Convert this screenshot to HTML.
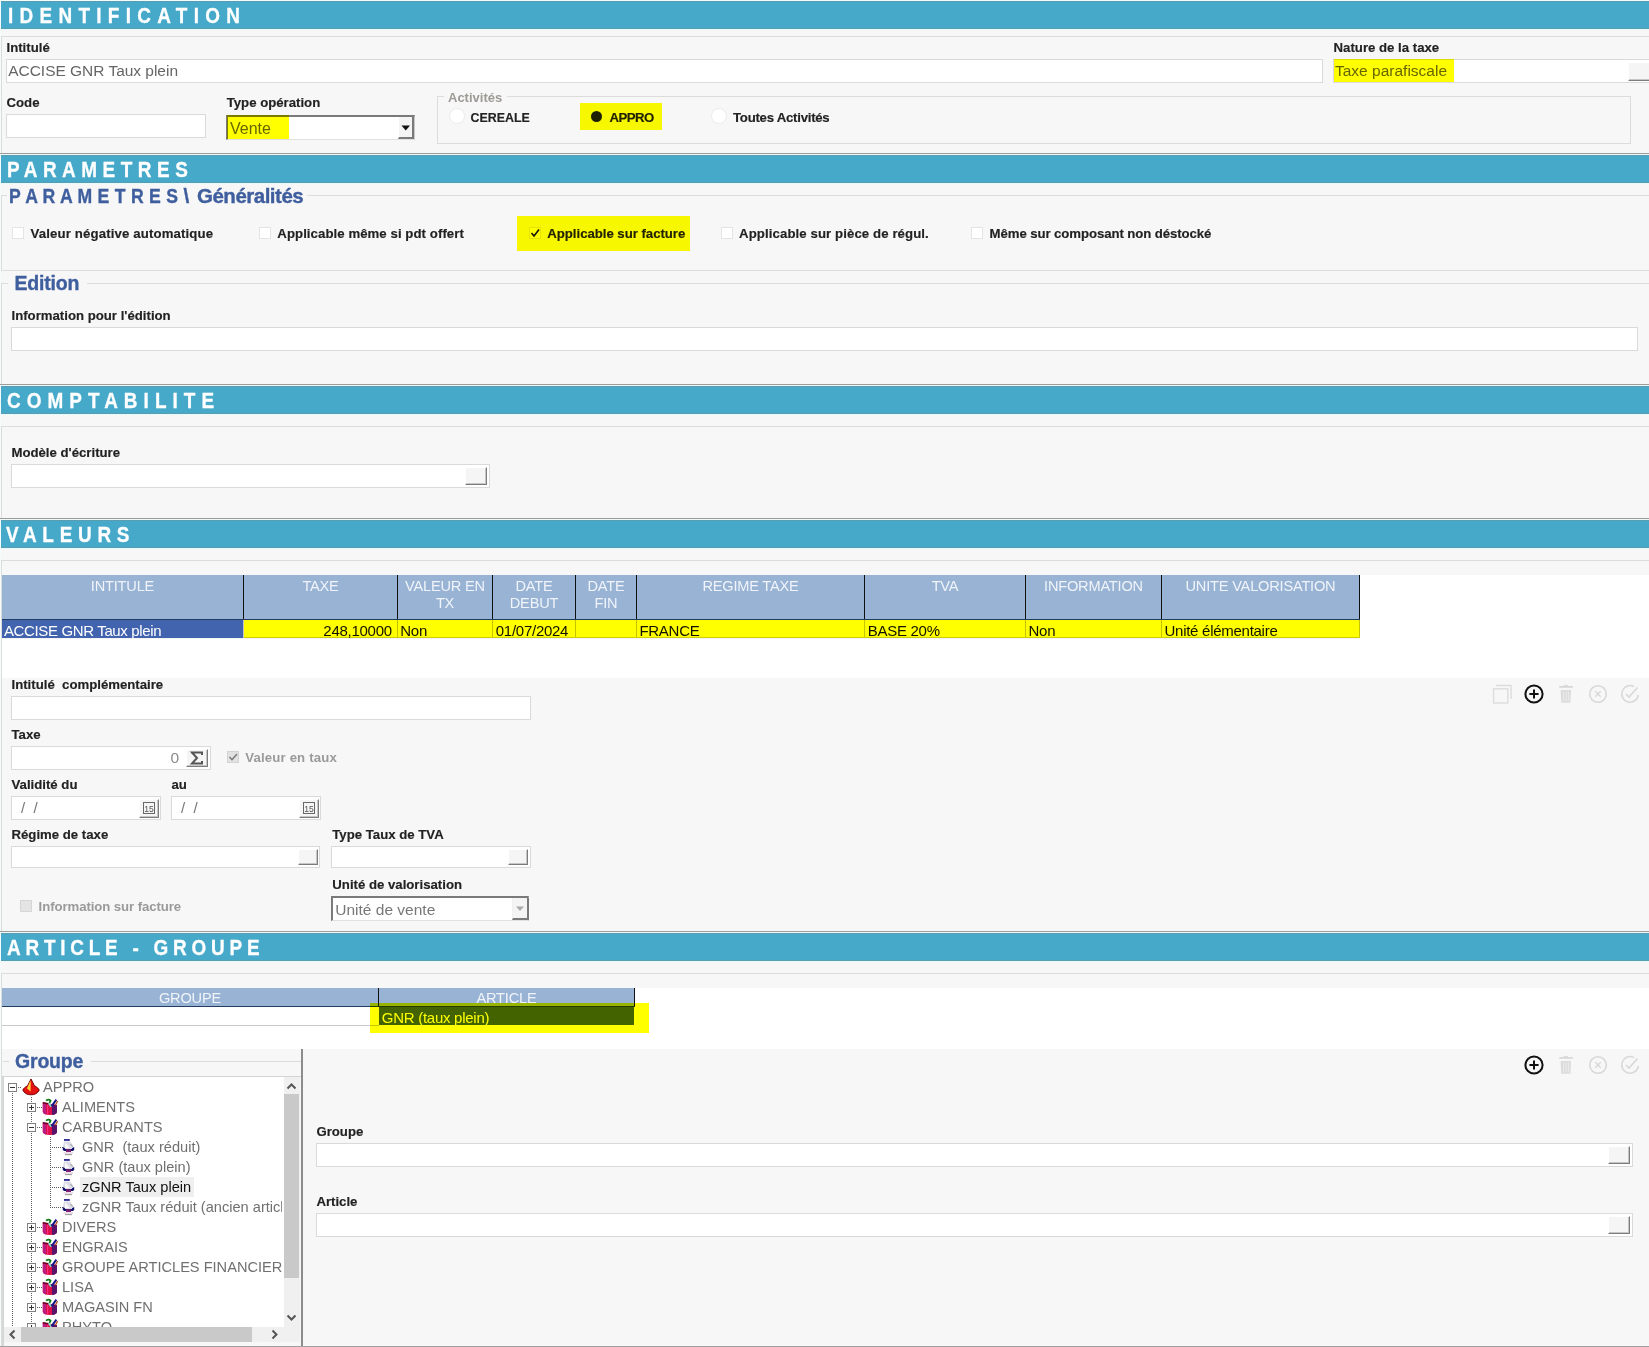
<!DOCTYPE html>
<html><head><meta charset="utf-8"><style>
html,body{margin:0;padding:0;width:1649px;height:1347px;overflow:hidden;background:#f7f7f7}
body{position:relative;font-family:"Liberation Sans",sans-serif}
.a{position:absolute}
.t{position:absolute;white-space:nowrap;font-family:"Liberation Sans",sans-serif}
</style></head><body>
<div class="a" style="left:0;top:0;width:1649px;height:1347px;background:#f7f7f7"></div>
<div class="a" style="left:0px;top:0px;width:1649px;height:1px;background:#f2fcfc;"></div>
<div class="a" style="left:0px;top:0px;width:1px;height:1347px;background:#f6fbfb;"></div>
<div class="a" style="left:1px;top:1px;width:1648px;height:28px;background:#47a9c9;"></div>
<div class="a" style="left:1px;top:1px;width:1648px;height:1px;background:#5a9db0;"></div>
<div class="a" style="left:1px;top:28px;width:1648px;height:1px;background:#5a9db0;"></div>
<div class="a" style="left:0px;top:29px;width:1649px;height:1px;background:#e6fbfb;"></div>
<div class="t" style="left:7.80px;top:6px;font-size:22px;line-height:20px;color:#fff;transform:scaleX(0.86);transform-origin:0.00px 0;font-weight:bold;letter-spacing:7.331px;-webkit-text-stroke:0.3px #fff;">IDENTIFICATION</div>
<div class="a" style="left:1px;top:36px;width:1648px;height:1px;background:#dcdcdc;"></div>
<div class="a" style="left:1px;top:36px;width:1px;height:117px;background:#dcdcdc;"></div>
<div class="t" style="left:6.50px;top:38px;font-size:13.2px;line-height:20px;color:#222;font-weight:bold;-webkit-text-stroke:0.15px #222;">Intitulé</div>
<div class="a" style="left:6px;top:59px;width:1317px;height:24px;background:#fff;box-sizing:border-box;border:1px solid #dadada;"></div>
<div class="t" style="left:8.20px;top:61px;font-size:15.5px;line-height:20px;color:#666;letter-spacing:-0.023px;">ACCISE GNR Taux plein</div>
<div class="t" style="left:1333.60px;top:38px;font-size:13.2px;line-height:20px;color:#222;font-weight:bold;-webkit-text-stroke:0.15px #222;">Nature de la taxe</div>
<div class="a" style="left:1333px;top:59px;width:320px;height:24px;background:#fff;box-sizing:border-box;border:1px solid #dadada;"></div>
<div class="a" style="left:1628px;top:62px;width:24px;height:19px;background:#f5f5f5;box-sizing:border-box;border-right:1px solid #7c7c7c;border-bottom:1px solid #7c7c7c;border-top:1px solid #fff;border-left:1px solid #fff;box-shadow:inset -1px -1px 0 #c6c6c6;"></div>
<div class="t" style="left:1335.00px;top:60.599999999999994px;font-size:15.5px;line-height:20px;color:#666;">Taxe parafiscale</div>
<div class="a" style="left:1334px;top:59px;width:120px;height:23px;background:#ffff00;mix-blend-mode:multiply;z-index:50;"></div>
<div class="t" style="left:6.50px;top:93px;font-size:13.2px;line-height:20px;color:#222;font-weight:bold;-webkit-text-stroke:0.15px #222;">Code</div>
<div class="a" style="left:6px;top:114px;width:200px;height:24px;background:#fff;box-sizing:border-box;border:1px solid #dadada;"></div>
<div class="t" style="left:226.70px;top:93px;font-size:13.2px;line-height:20px;color:#222;font-weight:bold;-webkit-text-stroke:0.15px #222;">Type opération</div>
<div class="a" style="left:226px;top:115px;width:189px;height:25px;background:#fff;box-sizing:border-box;border-top:2px solid #7a7a7a;border-left:2px solid #7a7a7a;border-right:1px solid #c8c8c8;border-bottom:1px solid #e0e0e0;"></div>
<div class="a" style="left:398px;top:117px;width:16px;height:22px;background:#f4f4f4;box-sizing:border-box;border-right:2px solid #7a7a7a;border-bottom:2px solid #7a7a7a;border-left:1px solid #fff;"></div>
<svg class="a" style="left:400px;top:124px" width="12" height="8"><path d="M1.5 1.5 L10 1.5 L5.75 6.5 Z" fill="#111"/></svg>
<div class="t" style="left:230.00px;top:119px;font-size:16px;line-height:20px;color:#666;">Vente</div>
<div class="a" style="left:227px;top:115px;width:62px;height:24px;background:#ffff00;mix-blend-mode:multiply;z-index:50;"></div>
<div class="a" style="left:437px;top:96px;width:1194px;height:48px;box-sizing:border-box;border:1px solid #dcdcdc;"></div>
<div class="a" style="left:444px;top:90px;width:63px;height:10px;background:#f7f7f7;"></div>
<div class="t" style="left:448.00px;top:87.6px;font-size:13px;line-height:20px;color:#9d9a95;font-weight:bold;">Activités</div>
<div class="a" style="left:450px;top:109px;width:14px;height:14px;background:#fff;border-radius:50%;box-shadow:0 0 0 1px #ececec;"></div>
<div class="t" style="left:470.60px;top:107.8px;font-size:12.4px;line-height:20px;color:#222;font-weight:bold;-webkit-text-stroke:0.15px #222;">CEREALE</div>
<div class="a" style="left:580px;top:103px;width:82px;height:27px;background:#ffff00;mix-blend-mode:multiply;z-index:50;"></div>
<div class="a" style="left:590.5px;top:111px;width:11px;height:11px;background:#1e1e1e;border-radius:50%;"></div>
<div class="t" style="left:609.40px;top:107.7px;font-size:13.2px;line-height:20px;color:#222;font-weight:bold;-webkit-text-stroke:0.15px #222;letter-spacing:-0.482px;">APPRO</div>
<div class="a" style="left:711.5px;top:109px;width:14px;height:14px;background:#fff;border-radius:50%;box-shadow:0 0 0 1px #ececec;"></div>
<div class="t" style="left:733.00px;top:107.7px;font-size:13.2px;line-height:20px;color:#222;font-weight:bold;-webkit-text-stroke:0.15px #222;letter-spacing:-0.246px;">Toutes Activités</div>
<div class="a" style="left:0px;top:153px;width:1649px;height:1px;background:#9c9c9c;"></div>
<div class="a" style="left:0px;top:154px;width:1649px;height:1px;background:#eefafa;"></div>
<div class="a" style="left:1px;top:155px;width:1648px;height:28px;background:#47a9c9;"></div>
<div class="a" style="left:1px;top:155px;width:1648px;height:1px;background:#5a9db0;"></div>
<div class="a" style="left:1px;top:182px;width:1648px;height:1px;background:#5a9db0;"></div>
<div class="a" style="left:0px;top:183px;width:1649px;height:1px;background:#e6fbfb;"></div>
<div class="t" style="left:7.40px;top:160px;font-size:22px;line-height:20px;color:#fff;transform:scaleX(0.86);transform-origin:0.00px 0;font-weight:bold;letter-spacing:6.425px;-webkit-text-stroke:0.3px #fff;">PARAMETRES</div>
<div class="a" style="left:1px;top:195px;width:1648px;height:1px;background:#dcdcdc;"></div>
<div class="a" style="left:1px;top:195px;width:1px;height:76px;background:#dcdcdc;"></div>
<div class="a" style="left:1px;top:270px;width:1648px;height:1px;background:#dcdcdc;"></div>
<div class="a" style="left:7px;top:184px;width:300px;height:20px;background:#f7f7f7;"></div>
<div class="t" style="left:8.70px;top:186.2px;font-size:20.5px;line-height:20px;color:#3f5e9e;transform:scaleX(0.86);transform-origin:0.00px 0;font-weight:bold;letter-spacing:0.279px;-webkit-text-stroke:0.35px #3f5e9e;">P A R A M E T R E S</div>
<div class="t" style="left:183.40px;top:186.2px;font-size:20.5px;line-height:20px;color:#3f5e9e;font-weight:bold;-webkit-text-stroke:0.35px #3f5e9e;">\</div>
<div class="t" style="left:197.00px;top:186.2px;font-size:20.5px;line-height:20px;color:#3f5e9e;font-weight:bold;letter-spacing:-0.497px;-webkit-text-stroke:0.35px #3f5e9e;">Généralités</div>
<div class="a" style="left:12px;top:227px;width:12px;height:12px;background:#fff;box-sizing:border-box;border:1px solid #e4e4e4;"></div>
<div class="t" style="left:30.60px;top:223.7px;font-size:13.2px;line-height:20px;color:#222;font-weight:bold;-webkit-text-stroke:0.15px #222;letter-spacing:0.139px;">Valeur négative automatique</div>
<div class="a" style="left:259px;top:227px;width:12px;height:12px;background:#fff;box-sizing:border-box;border:1px solid #e4e4e4;"></div>
<div class="t" style="left:277.30px;top:223.7px;font-size:13.2px;line-height:20px;color:#222;font-weight:bold;-webkit-text-stroke:0.15px #222;letter-spacing:0.067px;">Applicable même si pdt offert</div>
<div class="a" style="left:529px;top:227px;width:12px;height:12px;background:#fff;box-sizing:border-box;border:1px solid #e4e4e4;"></div>
<svg class="a" style="left:529px;top:227px" width="12" height="12"><path d="M2.5 6 L5 9 L10 2.5" fill="none" stroke="#111" stroke-width="1.6"/></svg>
<div class="t" style="left:547.30px;top:223.7px;font-size:13.2px;line-height:20px;color:#222;font-weight:bold;-webkit-text-stroke:0.15px #222;letter-spacing:-0.025px;">Applicable sur facture</div>
<div class="a" style="left:517px;top:216px;width:173px;height:35px;background:#ffff00;mix-blend-mode:multiply;z-index:50;"></div>
<div class="a" style="left:721px;top:227px;width:12px;height:12px;background:#fff;box-sizing:border-box;border:1px solid #e4e4e4;"></div>
<div class="t" style="left:739.10px;top:223.7px;font-size:13.2px;line-height:20px;color:#222;font-weight:bold;-webkit-text-stroke:0.15px #222;letter-spacing:0.097px;">Applicable sur pièce de régul.</div>
<div class="a" style="left:971px;top:227px;width:12px;height:12px;background:#fff;box-sizing:border-box;border:1px solid #e4e4e4;"></div>
<div class="t" style="left:989.60px;top:223.7px;font-size:13.2px;line-height:20px;color:#222;font-weight:bold;-webkit-text-stroke:0.15px #222;letter-spacing:-0.082px;">Même sur composant non déstocké</div>
<div class="a" style="left:1px;top:283px;width:1648px;height:1px;background:#dcdcdc;"></div>
<div class="a" style="left:1px;top:283px;width:1px;height:101px;background:#dcdcdc;"></div>
<div class="a" style="left:8px;top:272px;width:79px;height:22px;background:#f7f7f7;"></div>
<div class="t" style="left:14.60px;top:273px;font-size:19.5px;line-height:20px;color:#3f5e9e;font-weight:bold;letter-spacing:-0.226px;-webkit-text-stroke:0.35px #3f5e9e;">Edition</div>
<div class="t" style="left:11.50px;top:306px;font-size:13.2px;line-height:20px;color:#222;font-weight:bold;-webkit-text-stroke:0.15px #222;">Information pour l'édition</div>
<div class="a" style="left:11px;top:327px;width:1627px;height:24px;background:#fff;box-sizing:border-box;border:1px solid #dadada;"></div>
<div class="a" style="left:0px;top:384px;width:1649px;height:1px;background:#9c9c9c;"></div>
<div class="a" style="left:0px;top:385px;width:1649px;height:1px;background:#eefafa;"></div>
<div class="a" style="left:1px;top:386px;width:1648px;height:28px;background:#47a9c9;"></div>
<div class="a" style="left:1px;top:386px;width:1648px;height:1px;background:#5a9db0;"></div>
<div class="a" style="left:1px;top:413px;width:1648px;height:1px;background:#5a9db0;"></div>
<div class="a" style="left:0px;top:414px;width:1649px;height:1px;background:#e6fbfb;"></div>
<div class="t" style="left:7.00px;top:391.4px;font-size:22px;line-height:20px;color:#fff;transform:scaleX(0.86);transform-origin:0.00px 0;font-weight:bold;letter-spacing:7.032px;-webkit-text-stroke:0.3px #fff;">COMPTABILITE</div>
<div class="a" style="left:1px;top:426px;width:1648px;height:1px;background:#dcdcdc;"></div>
<div class="a" style="left:1px;top:426px;width:1px;height:92px;background:#dcdcdc;"></div>
<div class="t" style="left:11.40px;top:443px;font-size:13.2px;line-height:20px;color:#222;font-weight:bold;-webkit-text-stroke:0.15px #222;">Modèle d'écriture</div>
<div class="a" style="left:11px;top:464px;width:479px;height:24px;background:#fff;box-sizing:border-box;border:1px solid #dadada;"></div>
<div class="a" style="left:465px;top:467px;width:22px;height:18px;background:#f5f5f5;box-sizing:border-box;border-right:1px solid #7c7c7c;border-bottom:1px solid #7c7c7c;border-top:1px solid #fff;border-left:1px solid #fff;box-shadow:inset -1px -1px 0 #c6c6c6;"></div>
<div class="a" style="left:0px;top:518px;width:1649px;height:1px;background:#9c9c9c;"></div>
<div class="a" style="left:0px;top:519px;width:1649px;height:1px;background:#eefafa;"></div>
<div class="a" style="left:1px;top:520px;width:1648px;height:28px;background:#47a9c9;"></div>
<div class="a" style="left:1px;top:520px;width:1648px;height:1px;background:#5a9db0;"></div>
<div class="a" style="left:1px;top:547px;width:1648px;height:1px;background:#5a9db0;"></div>
<div class="a" style="left:0px;top:548px;width:1649px;height:1px;background:#e6fbfb;"></div>
<div class="t" style="left:6.20px;top:525px;font-size:22px;line-height:20px;color:#fff;transform:scaleX(0.86);transform-origin:0.00px 0;font-weight:bold;letter-spacing:6.682px;-webkit-text-stroke:0.3px #fff;">VALEURS</div>
<div class="a" style="left:1px;top:560px;width:1648px;height:1px;background:#dcdcdc;"></div>
<div class="a" style="left:1px;top:560px;width:1px;height:371px;background:#dcdcdc;"></div>
<div class="a" style="left:2px;top:575px;width:1647px;height:103px;background:#fff;"></div>
<div class="a" style="left:2px;top:575px;width:1358px;height:44px;background:#98b3d3;"></div>
<div class="a" style="left:2px;top:619px;width:1358px;height:1px;background:#233c62;"></div>
<div class="a" style="left:243px;top:575px;width:1px;height:44px;background:#111;"></div>
<div class="a" style="left:397px;top:575px;width:1px;height:44px;background:#111;"></div>
<div class="a" style="left:492px;top:575px;width:1px;height:44px;background:#111;"></div>
<div class="a" style="left:575px;top:575px;width:1px;height:44px;background:#111;"></div>
<div class="a" style="left:636px;top:575px;width:1px;height:44px;background:#111;"></div>
<div class="a" style="left:864px;top:575px;width:1px;height:44px;background:#111;"></div>
<div class="a" style="left:1025px;top:575px;width:1px;height:44px;background:#111;"></div>
<div class="a" style="left:1161px;top:575px;width:1px;height:44px;background:#111;"></div>
<div class="a" style="left:1359px;top:575px;width:1px;height:44px;background:#111;"></div>
<div class="t" style="left:2px;top:576px;width:241px;text-align:center;font-size:14.6px;letter-spacing:-0.2px;line-height:20px;color:#f0f4fa">INTITULE</div>
<div class="t" style="left:244px;top:576px;width:153px;text-align:center;font-size:14.6px;letter-spacing:-0.2px;line-height:20px;color:#f0f4fa">TAXE</div>
<div class="t" style="left:398px;top:576px;width:94px;text-align:center;font-size:14.6px;letter-spacing:-0.2px;line-height:20px;color:#f0f4fa">VALEUR EN</div>
<div class="t" style="left:398px;top:593px;width:94px;text-align:center;font-size:14.6px;letter-spacing:-0.2px;line-height:20px;color:#f0f4fa">TX</div>
<div class="t" style="left:493px;top:576px;width:82px;text-align:center;font-size:14.6px;letter-spacing:-0.2px;line-height:20px;color:#f0f4fa">DATE</div>
<div class="t" style="left:493px;top:593px;width:82px;text-align:center;font-size:14.6px;letter-spacing:-0.2px;line-height:20px;color:#f0f4fa">DEBUT</div>
<div class="t" style="left:576px;top:576px;width:60px;text-align:center;font-size:14.6px;letter-spacing:-0.2px;line-height:20px;color:#f0f4fa">DATE</div>
<div class="t" style="left:576px;top:593px;width:60px;text-align:center;font-size:14.6px;letter-spacing:-0.2px;line-height:20px;color:#f0f4fa">FIN</div>
<div class="t" style="left:637px;top:576px;width:227px;text-align:center;font-size:14.6px;letter-spacing:-0.2px;line-height:20px;color:#f0f4fa">REGIME TAXE</div>
<div class="t" style="left:865px;top:576px;width:160px;text-align:center;font-size:14.6px;letter-spacing:-0.2px;line-height:20px;color:#f0f4fa">TVA</div>
<div class="t" style="left:1026px;top:576px;width:135px;text-align:center;font-size:14.6px;letter-spacing:-0.2px;line-height:20px;color:#f0f4fa">INFORMATION</div>
<div class="t" style="left:1162px;top:576px;width:197px;text-align:center;font-size:14.6px;letter-spacing:-0.2px;line-height:20px;color:#f0f4fa">UNITE VALORISATION</div>
<div class="a" style="left:2px;top:620px;width:241px;height:18px;background:#4263ad;"></div>
<div class="a" style="left:2px;top:638px;width:1358px;height:1px;background:#f4f4f4;"></div>
<div class="t" style="left:3.90px;top:621px;font-size:15px;line-height:20px;color:#fff;letter-spacing:-0.354px;">ACCISE GNR Taux plein</div>
<div class="a" style="left:243px;top:620px;width:1px;height:18px;background:#c4c4c4;"></div>
<div class="a" style="left:397px;top:620px;width:1px;height:18px;background:#c4c4c4;"></div>
<div class="a" style="left:492px;top:620px;width:1px;height:18px;background:#c4c4c4;"></div>
<div class="a" style="left:575px;top:620px;width:1px;height:18px;background:#c4c4c4;"></div>
<div class="a" style="left:636px;top:620px;width:1px;height:18px;background:#c4c4c4;"></div>
<div class="a" style="left:864px;top:620px;width:1px;height:18px;background:#c4c4c4;"></div>
<div class="a" style="left:1025px;top:620px;width:1px;height:18px;background:#c4c4c4;"></div>
<div class="a" style="left:1161px;top:620px;width:1px;height:18px;background:#c4c4c4;"></div>
<div class="a" style="left:1359px;top:620px;width:1px;height:18px;background:#c4c4c4;"></div>
<div class="a" style="left:244px;top:637px;width:1116px;height:1px;background:#cfcfcf;"></div>
<div class="t" style="left:0.00px;top:621px;font-size:14.4px;line-height:20px;color:#222;"></div>
<div class="t" style="left:323.35px;top:621px;font-size:15px;line-height:20px;color:#111;letter-spacing:-0.27px;">248,10000</div>
<div class="t" style="left:400.30px;top:621px;font-size:15px;line-height:20px;color:#111;letter-spacing:-0.27px;">Non</div>
<div class="t" style="left:495.80px;top:621px;font-size:15px;line-height:20px;color:#111;letter-spacing:-0.27px;">01/07/2024</div>
<div class="t" style="left:639.40px;top:621px;font-size:15px;line-height:20px;color:#111;letter-spacing:-0.27px;">FRANCE</div>
<div class="t" style="left:867.70px;top:621px;font-size:15px;line-height:20px;color:#111;letter-spacing:-0.27px;">BASE 20%</div>
<div class="t" style="left:1028.50px;top:621px;font-size:15px;line-height:20px;color:#111;letter-spacing:-0.27px;">Non</div>
<div class="t" style="left:1164.50px;top:621px;font-size:15px;line-height:20px;color:#111;letter-spacing:-0.27px;">Unité élémentaire</div>
<div class="a" style="left:244px;top:620px;width:1116px;height:18px;background:#ffff00;mix-blend-mode:multiply;z-index:50;"></div>
<svg class="a" style="left:1490px;top:682px" width="24" height="24"><path d="M6 3.5 H21 V17" fill="none" stroke="#dcdcdc" stroke-width="1.4"/><rect x="3.6" y="6.8" width="14.2" height="14.2" fill="none" stroke="#dcdcdc" stroke-width="1.4"/></svg>
<svg class="a" style="left:1522px;top:682px" width="24" height="24"><circle cx="12" cy="12" r="8.6" fill="none" stroke="#111" stroke-width="2"/><path d="M12 7.4 V16.6 M7.4 12 H16.6" stroke="#111" stroke-width="2"/></svg>
<svg class="a" style="left:1554px;top:682px" width="24" height="24"><path d="M5.3 4.9 H18.8" stroke="#d8d8d8" stroke-width="1.8"/><path d="M9.5 3.5 H14" stroke="#dedede" stroke-width="1.2"/><path d="M6.6 8 H17 L16.4 20.8 H7.2 Z" fill="#dcdcdc"/><path d="M9.6 9.5 V19.4 M12 9.5 V19.4 M14.4 9.5 V19.4" stroke="#ebebeb" stroke-width="1"/></svg>
<svg class="a" style="left:1586px;top:682px" width="24" height="24"><circle cx="12" cy="12" r="8.3" fill="none" stroke="#d8d8d8" stroke-width="1.6"/><path d="M9.3 9.3 L14.7 14.7 M14.7 9.3 L9.3 14.7" stroke="#d8d8d8" stroke-width="1.4"/></svg>
<svg class="a" style="left:1618px;top:682px" width="24" height="24"><path d="M16 4.6 A8.3 8.3 0 1 0 20.3 12.8" fill="none" stroke="#d8d8d8" stroke-width="1.6"/><path d="M8 12 L11 15 L19.5 5.5" fill="none" stroke="#d8d8d8" stroke-width="1.6"/></svg>
<div class="t" style="left:11.50px;top:675px;font-size:13.2px;line-height:20px;color:#222;font-weight:bold;-webkit-text-stroke:0.15px #222;white-space:pre;">Intitulé  complémentaire</div>
<div class="a" style="left:11px;top:696px;width:520px;height:24px;background:#fff;box-sizing:border-box;border:1px solid #dadada;"></div>
<div class="t" style="left:11.50px;top:725px;font-size:13.2px;line-height:20px;color:#222;font-weight:bold;-webkit-text-stroke:0.15px #222;">Taxe</div>
<div class="a" style="left:11px;top:746px;width:200px;height:24px;background:#fff;box-sizing:border-box;border:1px solid #dadada;"></div>
<div class="t" style="left:170.60px;top:747.5px;font-size:15.5px;line-height:20px;color:#8a8a8a;">0</div>
<div class="a" style="left:186px;top:749px;width:22px;height:18px;background:#f5f5f5;box-sizing:border-box;border-right:1px solid #7c7c7c;border-bottom:1px solid #7c7c7c;border-top:1px solid #fff;border-left:1px solid #fff;box-shadow:inset -1px -1px 0 #c6c6c6;"></div>
<svg class="a" style="left:188px;top:750px" width="18" height="16"><path d="M3 2.5 H14 V5 M14 2.5 H4 L9 8 L4 13.5 H14 V11" fill="none" stroke="#555" stroke-width="2"/></svg>
<div class="a" style="left:227px;top:751px;width:12px;height:12px;background:#e2e2e2;box-sizing:border-box;border:1px solid #d4d4d4;"></div>
<svg class="a" style="left:227px;top:751px" width="12" height="12"><path d="M2.5 6 L5 8.8 L10 3" fill="none" stroke="#777" stroke-width="1.4"/></svg>
<div class="t" style="left:245.30px;top:747.7px;font-size:13.2px;line-height:20px;color:#9a9a9a;font-weight:bold;letter-spacing:0.154px;">Valeur en taux</div>
<div class="t" style="left:11.50px;top:775px;font-size:13.2px;line-height:20px;color:#222;font-weight:bold;-webkit-text-stroke:0.15px #222;">Validité du</div>
<div class="t" style="left:171.50px;top:775px;font-size:13.2px;line-height:20px;color:#222;font-weight:bold;-webkit-text-stroke:0.15px #222;">au</div>
<div class="a" style="left:11px;top:796px;width:150px;height:24px;background:#fff;box-sizing:border-box;border:1px solid #dadada;"></div>
<div class="t" style="left:21.00px;top:798px;font-size:15px;line-height:20px;color:#777;white-space:pre;">/  /</div>
<div class="a" style="left:139px;top:799px;width:20px;height:19px;background:#f5f5f5;box-sizing:border-box;border-right:1px solid #7c7c7c;border-bottom:1px solid #7c7c7c;border-top:1px solid #fff;border-left:1px solid #fff;box-shadow:inset -1px -1px 0 #c6c6c6;"></div>
<svg class="a" style="left:142px;top:801px" width="14" height="14"><rect x="1.5" y="1.5" width="11" height="11" fill="none" stroke="#666" stroke-width="1"/><text x="7" y="11" font-size="8.5" font-family="Liberation Sans" text-anchor="middle" fill="#555">15</text></svg>
<div class="a" style="left:171px;top:796px;width:150px;height:24px;background:#fff;box-sizing:border-box;border:1px solid #dadada;"></div>
<div class="t" style="left:181.00px;top:798px;font-size:15px;line-height:20px;color:#777;white-space:pre;">/  /</div>
<div class="a" style="left:299px;top:799px;width:20px;height:19px;background:#f5f5f5;box-sizing:border-box;border-right:1px solid #7c7c7c;border-bottom:1px solid #7c7c7c;border-top:1px solid #fff;border-left:1px solid #fff;box-shadow:inset -1px -1px 0 #c6c6c6;"></div>
<svg class="a" style="left:302px;top:801px" width="14" height="14"><rect x="1.5" y="1.5" width="11" height="11" fill="none" stroke="#666" stroke-width="1"/><text x="7" y="11" font-size="8.5" font-family="Liberation Sans" text-anchor="middle" fill="#555">15</text></svg>
<div class="t" style="left:11.50px;top:825px;font-size:13.2px;line-height:20px;color:#222;font-weight:bold;-webkit-text-stroke:0.15px #222;">Régime de taxe</div>
<div class="a" style="left:11px;top:846px;width:309px;height:22px;background:#fff;box-sizing:border-box;border:1px solid #dadada;"></div>
<div class="a" style="left:298px;top:849px;width:20px;height:16px;background:#f5f5f5;box-sizing:border-box;border-right:1px solid #7c7c7c;border-bottom:1px solid #7c7c7c;border-top:1px solid #fff;border-left:1px solid #fff;box-shadow:inset -1px -1px 0 #c6c6c6;"></div>
<div class="t" style="left:332.30px;top:825px;font-size:13.2px;line-height:20px;color:#222;font-weight:bold;-webkit-text-stroke:0.15px #222;">Type Taux de TVA</div>
<div class="a" style="left:331px;top:846px;width:200px;height:22px;background:#fff;box-sizing:border-box;border:1px solid #dadada;"></div>
<div class="a" style="left:508px;top:849px;width:20px;height:16px;background:#f5f5f5;box-sizing:border-box;border-right:1px solid #7c7c7c;border-bottom:1px solid #7c7c7c;border-top:1px solid #fff;border-left:1px solid #fff;box-shadow:inset -1px -1px 0 #c6c6c6;"></div>
<div class="t" style="left:332.30px;top:875px;font-size:13.2px;line-height:20px;color:#222;font-weight:bold;-webkit-text-stroke:0.15px #222;">Unité de valorisation</div>
<div class="a" style="left:331px;top:896px;width:198px;height:25px;background:#fff;box-sizing:border-box;border-top:2px solid #7a7a7a;border-left:2px solid #7a7a7a;border-right:1px solid #c8c8c8;border-bottom:1px solid #e0e0e0;"></div>
<div class="a" style="left:512px;top:898px;width:17px;height:22px;background:#f4f4f4;box-sizing:border-box;border-right:2px solid #7a7a7a;border-bottom:2px solid #7a7a7a;border-left:1px solid #f0f0f0;"></div>
<svg class="a" style="left:514px;top:905px" width="12" height="8"><path d="M2 1.5 L10 1.5 L6 6 Z" fill="#aaa"/></svg>
<div class="t" style="left:335.30px;top:899.7px;font-size:15.5px;line-height:20px;color:#777;">Unité de vente</div>
<div class="a" style="left:20px;top:900px;width:12px;height:12px;background:#e4e4e4;box-sizing:border-box;border:1px solid #d6d6d6;"></div>
<div class="t" style="left:38.60px;top:897px;font-size:13.2px;line-height:20px;color:#9a9a9a;font-weight:bold;letter-spacing:-0.081px;">Information sur facture</div>
<div class="a" style="left:0px;top:931px;width:1649px;height:1px;background:#9c9c9c;"></div>
<div class="a" style="left:0px;top:932px;width:1649px;height:1px;background:#eefafa;"></div>
<div class="a" style="left:1px;top:933px;width:1648px;height:28px;background:#47a9c9;"></div>
<div class="a" style="left:1px;top:933px;width:1648px;height:1px;background:#5a9db0;"></div>
<div class="a" style="left:1px;top:960px;width:1648px;height:1px;background:#5a9db0;"></div>
<div class="a" style="left:0px;top:961px;width:1649px;height:1px;background:#e6fbfb;"></div>
<div class="t" style="left:6.50px;top:938.2px;font-size:22px;line-height:20px;color:#fff;transform:scaleX(0.86);transform-origin:0.00px 0;font-weight:bold;letter-spacing:5.560px;-webkit-text-stroke:0.3px #fff;">ARTICLE - GROUPE</div>
<div class="a" style="left:1px;top:973px;width:1648px;height:1px;background:#dcdcdc;"></div>
<div class="a" style="left:1px;top:973px;width:1px;height:374px;background:#dcdcdc;"></div>
<div class="a" style="left:2px;top:988px;width:1647px;height:61px;background:#fff;"></div>
<div class="a" style="left:2px;top:988px;width:633px;height:18px;background:#98b3d3;"></div>
<div class="a" style="left:2px;top:1006px;width:633px;height:1px;background:#233c62;"></div>
<div class="a" style="left:378px;top:988px;width:1px;height:18px;background:#111;"></div>
<div class="a" style="left:634px;top:988px;width:1px;height:18px;background:#111;"></div>
<div class="t" style="left:2px;top:988px;width:376px;text-align:center;font-size:14.6px;letter-spacing:-0.2px;line-height:20px;color:#f0f4fa">GROUPE</div>
<div class="t" style="left:379px;top:988px;width:255px;text-align:center;font-size:14.6px;letter-spacing:-0.2px;line-height:20px;color:#f0f4fa">ARTICLE</div>
<div class="a" style="left:2px;top:1025px;width:377px;height:1px;background:#c8c8c8;"></div>
<div class="a" style="left:379px;top:1007px;width:255px;height:18px;background:#4263ad;"></div>
<div class="t" style="left:381.80px;top:1007.6px;font-size:15px;line-height:20px;color:#fff;letter-spacing:-0.27px;">GNR (taux plein)</div>
<div class="a" style="left:370px;top:1003px;width:279px;height:30px;background:#ffff00;mix-blend-mode:multiply;z-index:50;"></div>
<div class="a" style="left:2px;top:1049px;width:1647px;height:298px;background:#f7f7f7;"></div>
<div class="a" style="left:1px;top:973px;width:1px;height:374px;background:#dcdcdc;"></div>
<div class="a" style="left:3px;top:1061px;width:299px;height:1px;background:#dcdcdc;"></div>
<div class="a" style="left:9px;top:1050px;width:82px;height:22px;background:#f7f7f7;"></div>
<div class="t" style="left:15.00px;top:1051.3px;font-size:19.5px;line-height:20px;color:#3f5e9e;font-weight:bold;letter-spacing:-0.184px;-webkit-text-stroke:0.35px #3f5e9e;">Groupe</div>
<div class="a" style="left:301px;top:1049px;width:2px;height:298px;background:#8c8c8c;"></div>
<div class="a" style="left:2px;top:1076px;width:2px;height:271px;background:#d6d6d6;"></div>
<div class="a" style="left:3px;top:1076px;width:298px;height:1px;background:#d4d4d4;"></div>
<div class="a" style="left:4px;top:1077px;width:280px;height:250px;background:#fff;"></div>
<div class="a" style="left:0px;top:1346px;width:1649px;height:1px;background:#a0a0a0;"></div>
<div class="a" style="left:4px;top:1077px;width:278px;height:250px;overflow:hidden">
<div class="a" style="left:8px;top:16px;width:1px;height:234px;background:repeating-linear-gradient(#5c5c5c 0 1px,transparent 1px 2px)"></div>
<div class="a" style="left:27px;top:20px;width:1px;height:230px;background:repeating-linear-gradient(#5c5c5c 0 1px,transparent 1px 2px)"></div>
<div class="a" style="left:46px;top:60px;width:1px;height:71px;background:repeating-linear-gradient(#5c5c5c 0 1px,transparent 1px 2px)"></div>
<svg class="a" style="left:4px;top:6px" width="9" height="9"><rect x=".5" y=".5" width="8" height="8" fill="#fff" stroke="#808080"/><path d="M2 4.5 H7" stroke="#333" stroke-width="1"/></svg>
<div class="a" style="left:14px;top:10px;width:4px;height:1px;background:repeating-linear-gradient(90deg,#5c5c5c 0 1px,transparent 1px 2px)"></div>
<svg class="a" style="left:18px;top:1px" width="18" height="18"><path d="M9 1 L12.3 7.5 Q16.5 10 17.3 12 Q15 16.8 9 16.8 Q3 16.8 0.8 12 Q1.5 10 5.7 7.5 Z" fill="#e41212" stroke="#7a0000" stroke-width="1"/><path d="M8.6 2.3 L5 10.5 L8.6 13.4 Z" fill="#ffd23c"/></svg>
<div class="t" style="left:39.10px;top:0px;font-size:14.6px;line-height:20px;color:#707070;white-space:pre;">APPRO</div>
<svg class="a" style="left:23px;top:26px" width="9" height="9"><rect x=".5" y=".5" width="8" height="8" fill="#fff" stroke="#808080"/><path d="M2 4.5 H7 M4.5 2 V7" stroke="#333" stroke-width="1"/></svg>
<div class="a" style="left:33px;top:30px;width:5px;height:1px;background:repeating-linear-gradient(90deg,#5c5c5c 0 1px,transparent 1px 2px)"></div>
<svg class="a" style="left:37px;top:21px" width="17" height="17"><path d="M1.8 4.6 L16 7 L16 14 Q15.5 17 9 17 Q2.5 17 1.8 14 Z" fill="#dc1048"/><path d="M1.8 4.6 L5 5.1 L5 16.6 Q2.4 16 1.8 14 Z" fill="#b81c80"/><path d="M6.6 6.5 V16.5" stroke="#ff2a88" stroke-width="1.2"/><path d="M11 6.3 L16 7 L16 14 Q15.5 16.6 11 17 Z" fill="#58146a"/><path d="M1.8 4.8 L7.5 5.8" stroke="#6a0020" stroke-width="1.6"/><path d="M5 2.6 Q7.6 0.6 9.6 2.6 L8.4 5.2" fill="none" stroke="#0c7a12" stroke-width="1.7"/><path d="M7.8 5.2 L10.3 8.6" stroke="#80e6d0" stroke-width="1.9"/><path d="M10.6 8.2 L15.4 1.6" stroke="#16168a" stroke-width="2"/><path d="M16.6 3 L14.4 7.2" stroke="#c4541a" stroke-width="1.3"/></svg>
<div class="t" style="left:58.00px;top:20px;font-size:14.6px;line-height:20px;color:#707070;white-space:pre;">ALIMENTS</div>
<svg class="a" style="left:23px;top:46px" width="9" height="9"><rect x=".5" y=".5" width="8" height="8" fill="#fff" stroke="#808080"/><path d="M2 4.5 H7" stroke="#333" stroke-width="1"/></svg>
<div class="a" style="left:33px;top:50px;width:5px;height:1px;background:repeating-linear-gradient(90deg,#5c5c5c 0 1px,transparent 1px 2px)"></div>
<svg class="a" style="left:37px;top:41px" width="17" height="17"><path d="M1.8 4.6 L16 7 L16 14 Q15.5 17 9 17 Q2.5 17 1.8 14 Z" fill="#dc1048"/><path d="M1.8 4.6 L5 5.1 L5 16.6 Q2.4 16 1.8 14 Z" fill="#b81c80"/><path d="M6.6 6.5 V16.5" stroke="#ff2a88" stroke-width="1.2"/><path d="M11 6.3 L16 7 L16 14 Q15.5 16.6 11 17 Z" fill="#58146a"/><path d="M1.8 4.8 L7.5 5.8" stroke="#6a0020" stroke-width="1.6"/><path d="M5 2.6 Q7.6 0.6 9.6 2.6 L8.4 5.2" fill="none" stroke="#0c7a12" stroke-width="1.7"/><path d="M7.8 5.2 L10.3 8.6" stroke="#80e6d0" stroke-width="1.9"/><path d="M10.6 8.2 L15.4 1.6" stroke="#16168a" stroke-width="2"/><path d="M16.6 3 L14.4 7.2" stroke="#c4541a" stroke-width="1.3"/></svg>
<div class="t" style="left:58.00px;top:40px;font-size:14.6px;line-height:20px;color:#707070;white-space:pre;">CARBURANTS</div>
<div class="a" style="left:48px;top:70px;width:11px;height:1px;background:repeating-linear-gradient(90deg,#5c5c5c 0 1px,transparent 1px 2px)"></div>
<svg class="a" style="left:58px;top:61px" width="13" height="18"><rect x="2" y="1.1" width="5.8" height="1.7" fill="#1a1a8a"/><path d="M2 3.5 L8 3.5 L11.5 8 L11.5 13 L1 13 L1 8 Z" fill="#dcdce6"/><path d="M3 4.5 L8 10 L3 10 Z" fill="#fafafa"/><path d="M8.5 6 L10.5 8.5" stroke="#9a9a9a" stroke-width="1"/><path d="M0.8 9 L3 10.3 L3 12.8 L0.8 12.2 Z M12.2 9 L10 10.3 L10 12.8 L12.2 12.2 Z" fill="#10106e"/><rect x="2" y="11" width="9" height="2" fill="#10106e"/><rect x="4" y="11.2" width="5" height="2.8" fill="#7a2070"/><rect x="1.5" y="14" width="9.5" height="2" fill="#eedbe8"/><rect x="3" y="16.2" width="7" height="0.9" fill="#8a8a8a"/></svg>
<div class="t" style="left:77.90px;top:60px;font-size:14.6px;line-height:20px;color:#707070;white-space:pre;">GNR  (taux réduit)</div>
<div class="a" style="left:48px;top:90px;width:11px;height:1px;background:repeating-linear-gradient(90deg,#5c5c5c 0 1px,transparent 1px 2px)"></div>
<svg class="a" style="left:58px;top:81px" width="13" height="18"><rect x="2" y="1.1" width="5.8" height="1.7" fill="#1a1a8a"/><path d="M2 3.5 L8 3.5 L11.5 8 L11.5 13 L1 13 L1 8 Z" fill="#dcdce6"/><path d="M3 4.5 L8 10 L3 10 Z" fill="#fafafa"/><path d="M8.5 6 L10.5 8.5" stroke="#9a9a9a" stroke-width="1"/><path d="M0.8 9 L3 10.3 L3 12.8 L0.8 12.2 Z M12.2 9 L10 10.3 L10 12.8 L12.2 12.2 Z" fill="#10106e"/><rect x="2" y="11" width="9" height="2" fill="#10106e"/><rect x="4" y="11.2" width="5" height="2.8" fill="#7a2070"/><rect x="1.5" y="14" width="9.5" height="2" fill="#eedbe8"/><rect x="3" y="16.2" width="7" height="0.9" fill="#8a8a8a"/></svg>
<div class="t" style="left:77.90px;top:80px;font-size:14.6px;line-height:20px;color:#707070;white-space:pre;">GNR (taux plein)</div>
<div class="a" style="left:48px;top:110px;width:11px;height:1px;background:repeating-linear-gradient(90deg,#5c5c5c 0 1px,transparent 1px 2px)"></div>
<div class="a" style="left:75.7px;top:100px;width:114px;height:20px;background:#efefef;"></div>
<svg class="a" style="left:58px;top:101px" width="13" height="18"><rect x="2" y="1.1" width="5.8" height="1.7" fill="#1a1a8a"/><path d="M2 3.5 L8 3.5 L11.5 8 L11.5 13 L1 13 L1 8 Z" fill="#dcdce6"/><path d="M3 4.5 L8 10 L3 10 Z" fill="#fafafa"/><path d="M8.5 6 L10.5 8.5" stroke="#9a9a9a" stroke-width="1"/><path d="M0.8 9 L3 10.3 L3 12.8 L0.8 12.2 Z M12.2 9 L10 10.3 L10 12.8 L12.2 12.2 Z" fill="#10106e"/><rect x="2" y="11" width="9" height="2" fill="#10106e"/><rect x="4" y="11.2" width="5" height="2.8" fill="#7a2070"/><rect x="1.5" y="14" width="9.5" height="2" fill="#eedbe8"/><rect x="3" y="16.2" width="7" height="0.9" fill="#8a8a8a"/></svg>
<div class="t" style="left:77.90px;top:100px;font-size:14.6px;line-height:20px;color:#111;white-space:pre;">zGNR Taux plein</div>
<div class="a" style="left:48px;top:130px;width:11px;height:1px;background:repeating-linear-gradient(90deg,#5c5c5c 0 1px,transparent 1px 2px)"></div>
<svg class="a" style="left:58px;top:121px" width="13" height="18"><rect x="2" y="1.1" width="5.8" height="1.7" fill="#1a1a8a"/><path d="M2 3.5 L8 3.5 L11.5 8 L11.5 13 L1 13 L1 8 Z" fill="#dcdce6"/><path d="M3 4.5 L8 10 L3 10 Z" fill="#fafafa"/><path d="M8.5 6 L10.5 8.5" stroke="#9a9a9a" stroke-width="1"/><path d="M0.8 9 L3 10.3 L3 12.8 L0.8 12.2 Z M12.2 9 L10 10.3 L10 12.8 L12.2 12.2 Z" fill="#10106e"/><rect x="2" y="11" width="9" height="2" fill="#10106e"/><rect x="4" y="11.2" width="5" height="2.8" fill="#7a2070"/><rect x="1.5" y="14" width="9.5" height="2" fill="#eedbe8"/><rect x="3" y="16.2" width="7" height="0.9" fill="#8a8a8a"/></svg>
<div class="t" style="left:77.90px;top:120px;font-size:14.6px;line-height:20px;color:#707070;white-space:pre;">zGNR Taux réduit (ancien article)</div>
<svg class="a" style="left:23px;top:146px" width="9" height="9"><rect x=".5" y=".5" width="8" height="8" fill="#fff" stroke="#808080"/><path d="M2 4.5 H7 M4.5 2 V7" stroke="#333" stroke-width="1"/></svg>
<div class="a" style="left:33px;top:150px;width:5px;height:1px;background:repeating-linear-gradient(90deg,#5c5c5c 0 1px,transparent 1px 2px)"></div>
<svg class="a" style="left:37px;top:141px" width="17" height="17"><path d="M1.8 4.6 L16 7 L16 14 Q15.5 17 9 17 Q2.5 17 1.8 14 Z" fill="#dc1048"/><path d="M1.8 4.6 L5 5.1 L5 16.6 Q2.4 16 1.8 14 Z" fill="#b81c80"/><path d="M6.6 6.5 V16.5" stroke="#ff2a88" stroke-width="1.2"/><path d="M11 6.3 L16 7 L16 14 Q15.5 16.6 11 17 Z" fill="#58146a"/><path d="M1.8 4.8 L7.5 5.8" stroke="#6a0020" stroke-width="1.6"/><path d="M5 2.6 Q7.6 0.6 9.6 2.6 L8.4 5.2" fill="none" stroke="#0c7a12" stroke-width="1.7"/><path d="M7.8 5.2 L10.3 8.6" stroke="#80e6d0" stroke-width="1.9"/><path d="M10.6 8.2 L15.4 1.6" stroke="#16168a" stroke-width="2"/><path d="M16.6 3 L14.4 7.2" stroke="#c4541a" stroke-width="1.3"/></svg>
<div class="t" style="left:58.00px;top:140px;font-size:14.6px;line-height:20px;color:#707070;white-space:pre;">DIVERS</div>
<svg class="a" style="left:23px;top:166px" width="9" height="9"><rect x=".5" y=".5" width="8" height="8" fill="#fff" stroke="#808080"/><path d="M2 4.5 H7 M4.5 2 V7" stroke="#333" stroke-width="1"/></svg>
<div class="a" style="left:33px;top:170px;width:5px;height:1px;background:repeating-linear-gradient(90deg,#5c5c5c 0 1px,transparent 1px 2px)"></div>
<svg class="a" style="left:37px;top:161px" width="17" height="17"><path d="M1.8 4.6 L16 7 L16 14 Q15.5 17 9 17 Q2.5 17 1.8 14 Z" fill="#dc1048"/><path d="M1.8 4.6 L5 5.1 L5 16.6 Q2.4 16 1.8 14 Z" fill="#b81c80"/><path d="M6.6 6.5 V16.5" stroke="#ff2a88" stroke-width="1.2"/><path d="M11 6.3 L16 7 L16 14 Q15.5 16.6 11 17 Z" fill="#58146a"/><path d="M1.8 4.8 L7.5 5.8" stroke="#6a0020" stroke-width="1.6"/><path d="M5 2.6 Q7.6 0.6 9.6 2.6 L8.4 5.2" fill="none" stroke="#0c7a12" stroke-width="1.7"/><path d="M7.8 5.2 L10.3 8.6" stroke="#80e6d0" stroke-width="1.9"/><path d="M10.6 8.2 L15.4 1.6" stroke="#16168a" stroke-width="2"/><path d="M16.6 3 L14.4 7.2" stroke="#c4541a" stroke-width="1.3"/></svg>
<div class="t" style="left:58.00px;top:160px;font-size:14.6px;line-height:20px;color:#707070;white-space:pre;">ENGRAIS</div>
<svg class="a" style="left:23px;top:186px" width="9" height="9"><rect x=".5" y=".5" width="8" height="8" fill="#fff" stroke="#808080"/><path d="M2 4.5 H7 M4.5 2 V7" stroke="#333" stroke-width="1"/></svg>
<div class="a" style="left:33px;top:190px;width:5px;height:1px;background:repeating-linear-gradient(90deg,#5c5c5c 0 1px,transparent 1px 2px)"></div>
<svg class="a" style="left:37px;top:181px" width="17" height="17"><path d="M1.8 4.6 L16 7 L16 14 Q15.5 17 9 17 Q2.5 17 1.8 14 Z" fill="#dc1048"/><path d="M1.8 4.6 L5 5.1 L5 16.6 Q2.4 16 1.8 14 Z" fill="#b81c80"/><path d="M6.6 6.5 V16.5" stroke="#ff2a88" stroke-width="1.2"/><path d="M11 6.3 L16 7 L16 14 Q15.5 16.6 11 17 Z" fill="#58146a"/><path d="M1.8 4.8 L7.5 5.8" stroke="#6a0020" stroke-width="1.6"/><path d="M5 2.6 Q7.6 0.6 9.6 2.6 L8.4 5.2" fill="none" stroke="#0c7a12" stroke-width="1.7"/><path d="M7.8 5.2 L10.3 8.6" stroke="#80e6d0" stroke-width="1.9"/><path d="M10.6 8.2 L15.4 1.6" stroke="#16168a" stroke-width="2"/><path d="M16.6 3 L14.4 7.2" stroke="#c4541a" stroke-width="1.3"/></svg>
<div class="t" style="left:58.00px;top:180px;font-size:14.6px;line-height:20px;color:#707070;white-space:pre;">GROUPE ARTICLES FINANCIERS</div>
<svg class="a" style="left:23px;top:206px" width="9" height="9"><rect x=".5" y=".5" width="8" height="8" fill="#fff" stroke="#808080"/><path d="M2 4.5 H7 M4.5 2 V7" stroke="#333" stroke-width="1"/></svg>
<div class="a" style="left:33px;top:210px;width:5px;height:1px;background:repeating-linear-gradient(90deg,#5c5c5c 0 1px,transparent 1px 2px)"></div>
<svg class="a" style="left:37px;top:201px" width="17" height="17"><path d="M1.8 4.6 L16 7 L16 14 Q15.5 17 9 17 Q2.5 17 1.8 14 Z" fill="#dc1048"/><path d="M1.8 4.6 L5 5.1 L5 16.6 Q2.4 16 1.8 14 Z" fill="#b81c80"/><path d="M6.6 6.5 V16.5" stroke="#ff2a88" stroke-width="1.2"/><path d="M11 6.3 L16 7 L16 14 Q15.5 16.6 11 17 Z" fill="#58146a"/><path d="M1.8 4.8 L7.5 5.8" stroke="#6a0020" stroke-width="1.6"/><path d="M5 2.6 Q7.6 0.6 9.6 2.6 L8.4 5.2" fill="none" stroke="#0c7a12" stroke-width="1.7"/><path d="M7.8 5.2 L10.3 8.6" stroke="#80e6d0" stroke-width="1.9"/><path d="M10.6 8.2 L15.4 1.6" stroke="#16168a" stroke-width="2"/><path d="M16.6 3 L14.4 7.2" stroke="#c4541a" stroke-width="1.3"/></svg>
<div class="t" style="left:58.00px;top:200px;font-size:14.6px;line-height:20px;color:#707070;white-space:pre;">LISA</div>
<svg class="a" style="left:23px;top:226px" width="9" height="9"><rect x=".5" y=".5" width="8" height="8" fill="#fff" stroke="#808080"/><path d="M2 4.5 H7 M4.5 2 V7" stroke="#333" stroke-width="1"/></svg>
<div class="a" style="left:33px;top:230px;width:5px;height:1px;background:repeating-linear-gradient(90deg,#5c5c5c 0 1px,transparent 1px 2px)"></div>
<svg class="a" style="left:37px;top:221px" width="17" height="17"><path d="M1.8 4.6 L16 7 L16 14 Q15.5 17 9 17 Q2.5 17 1.8 14 Z" fill="#dc1048"/><path d="M1.8 4.6 L5 5.1 L5 16.6 Q2.4 16 1.8 14 Z" fill="#b81c80"/><path d="M6.6 6.5 V16.5" stroke="#ff2a88" stroke-width="1.2"/><path d="M11 6.3 L16 7 L16 14 Q15.5 16.6 11 17 Z" fill="#58146a"/><path d="M1.8 4.8 L7.5 5.8" stroke="#6a0020" stroke-width="1.6"/><path d="M5 2.6 Q7.6 0.6 9.6 2.6 L8.4 5.2" fill="none" stroke="#0c7a12" stroke-width="1.7"/><path d="M7.8 5.2 L10.3 8.6" stroke="#80e6d0" stroke-width="1.9"/><path d="M10.6 8.2 L15.4 1.6" stroke="#16168a" stroke-width="2"/><path d="M16.6 3 L14.4 7.2" stroke="#c4541a" stroke-width="1.3"/></svg>
<div class="t" style="left:58.00px;top:220px;font-size:14.6px;line-height:20px;color:#707070;white-space:pre;">MAGASIN FN</div>
<svg class="a" style="left:23px;top:246px" width="9" height="9"><rect x=".5" y=".5" width="8" height="8" fill="#fff" stroke="#808080"/><path d="M2 4.5 H7 M4.5 2 V7" stroke="#333" stroke-width="1"/></svg>
<div class="a" style="left:33px;top:250px;width:5px;height:1px;background:repeating-linear-gradient(90deg,#5c5c5c 0 1px,transparent 1px 2px)"></div>
<svg class="a" style="left:37px;top:241px" width="17" height="17"><path d="M1.8 4.6 L16 7 L16 14 Q15.5 17 9 17 Q2.5 17 1.8 14 Z" fill="#dc1048"/><path d="M1.8 4.6 L5 5.1 L5 16.6 Q2.4 16 1.8 14 Z" fill="#b81c80"/><path d="M6.6 6.5 V16.5" stroke="#ff2a88" stroke-width="1.2"/><path d="M11 6.3 L16 7 L16 14 Q15.5 16.6 11 17 Z" fill="#58146a"/><path d="M1.8 4.8 L7.5 5.8" stroke="#6a0020" stroke-width="1.6"/><path d="M5 2.6 Q7.6 0.6 9.6 2.6 L8.4 5.2" fill="none" stroke="#0c7a12" stroke-width="1.7"/><path d="M7.8 5.2 L10.3 8.6" stroke="#80e6d0" stroke-width="1.9"/><path d="M10.6 8.2 L15.4 1.6" stroke="#16168a" stroke-width="2"/><path d="M16.6 3 L14.4 7.2" stroke="#c4541a" stroke-width="1.3"/></svg>
<div class="t" style="left:58.00px;top:240px;font-size:14.6px;line-height:20px;color:#707070;white-space:pre;">PHYTO</div>
</div>
<div class="a" style="left:284px;top:1077px;width:16px;height:250px;background:#f0f0f0;"></div>
<div class="a" style="left:284px;top:1094px;width:15px;height:184px;background:#c9c9c9;"></div>
<svg class="a" style="left:286px;top:1081px" width="11" height="10"><path d="M1.5 7.5 L5.5 3.5 L9.5 7.5" fill="none" stroke="#555" stroke-width="2"/></svg>
<svg class="a" style="left:286px;top:1313px" width="11" height="10"><path d="M1.5 2.5 L5.5 6.5 L9.5 2.5" fill="none" stroke="#555" stroke-width="2"/></svg>
<div class="a" style="left:4px;top:1327px;width:296px;height:15px;background:#f0f0f0;"></div>
<div class="a" style="left:21px;top:1327px;width:231px;height:15px;background:#c9c9c9;"></div>
<svg class="a" style="left:7px;top:1329px" width="10" height="11"><path d="M7.5 1.5 L3.5 5.5 L7.5 9.5" fill="none" stroke="#555" stroke-width="2"/></svg>
<svg class="a" style="left:270px;top:1329px" width="10" height="11"><path d="M2.5 1.5 L6.5 5.5 L2.5 9.5" fill="none" stroke="#555" stroke-width="2"/></svg>
<svg class="a" style="left:1522px;top:1053px" width="24" height="24"><circle cx="12" cy="12" r="8.6" fill="none" stroke="#111" stroke-width="2"/><path d="M12 7.4 V16.6 M7.4 12 H16.6" stroke="#111" stroke-width="2"/></svg>
<svg class="a" style="left:1554px;top:1053px" width="24" height="24"><path d="M5.3 4.9 H18.8" stroke="#d8d8d8" stroke-width="1.8"/><path d="M9.5 3.5 H14" stroke="#dedede" stroke-width="1.2"/><path d="M6.6 8 H17 L16.4 20.8 H7.2 Z" fill="#dcdcdc"/><path d="M9.6 9.5 V19.4 M12 9.5 V19.4 M14.4 9.5 V19.4" stroke="#ebebeb" stroke-width="1"/></svg>
<svg class="a" style="left:1586px;top:1053px" width="24" height="24"><circle cx="12" cy="12" r="8.3" fill="none" stroke="#d8d8d8" stroke-width="1.6"/><path d="M9.3 9.3 L14.7 14.7 M14.7 9.3 L9.3 14.7" stroke="#d8d8d8" stroke-width="1.4"/></svg>
<svg class="a" style="left:1618px;top:1053px" width="24" height="24"><path d="M16 4.6 A8.3 8.3 0 1 0 20.3 12.8" fill="none" stroke="#d8d8d8" stroke-width="1.6"/><path d="M8 12 L11 15 L19.5 5.5" fill="none" stroke="#d8d8d8" stroke-width="1.6"/></svg>
<div class="t" style="left:316.40px;top:1121.5px;font-size:13.2px;line-height:20px;color:#222;font-weight:bold;-webkit-text-stroke:0.15px #222;">Groupe</div>
<div class="a" style="left:316px;top:1143px;width:1317px;height:24px;background:#fff;box-sizing:border-box;border:1px solid #dadada;"></div>
<div class="a" style="left:1608px;top:1146px;width:22px;height:18px;background:#f5f5f5;box-sizing:border-box;border-right:1px solid #7c7c7c;border-bottom:1px solid #7c7c7c;border-top:1px solid #fff;border-left:1px solid #fff;box-shadow:inset -1px -1px 0 #c6c6c6;"></div>
<div class="t" style="left:316.40px;top:1191.8px;font-size:13.2px;line-height:20px;color:#222;font-weight:bold;-webkit-text-stroke:0.15px #222;">Article</div>
<div class="a" style="left:316px;top:1213px;width:1317px;height:24px;background:#fff;box-sizing:border-box;border:1px solid #dadada;"></div>
<div class="a" style="left:1608px;top:1216px;width:22px;height:18px;background:#f5f5f5;box-sizing:border-box;border-right:1px solid #7c7c7c;border-bottom:1px solid #7c7c7c;border-top:1px solid #fff;border-left:1px solid #fff;box-shadow:inset -1px -1px 0 #c6c6c6;"></div>
</body></html>
